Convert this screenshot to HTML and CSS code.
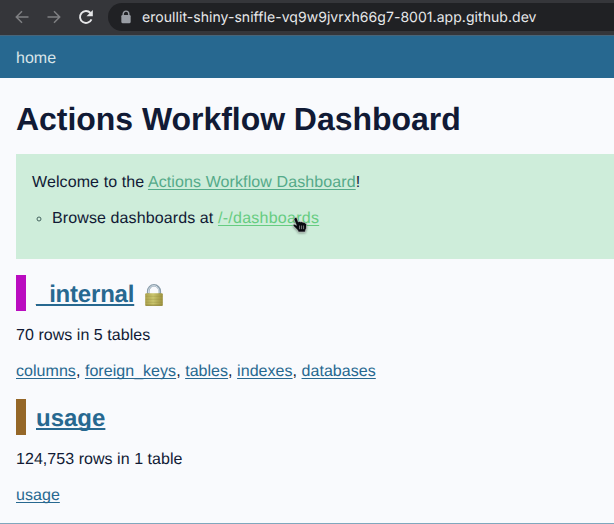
FILE: index.html
```html
<!DOCTYPE html>
<html lang="en">
<head>
<meta charset="utf-8">
<title>Actions Workflow Dashboard</title>
<link rel="stylesheet" href="styles.css">
</head>
<body>
<div class="toolbar">
  <svg class="nav-icon" viewBox="0 0 16 16"><path d="M14.5 8H2.5M8 2.3 2.3 8 8 13.7"/></svg>
  <svg class="nav-icon" viewBox="0 0 16 16"><path d="M1.5 8h12M8 2.3 13.7 8 8 13.7"/></svg>
  <svg class="nav-icon reload" viewBox="0 0 16 16"><path d="M13.5 10.4A6 6 0 1 1 12.5 4"/><path class="solid" d="M14.8 1v6.3H8.5z"/></svg>
  <div class="address">
    <svg class="secure" viewBox="0 0 10 12"><path class="shackle" d="M2.6 5V3.4a2.4 2.4 0 0 1 4.8 0V5"/><rect x="1" y="4.3" width="8" height="7" rx="1"/></svg>
    <span class="url">eroullit-shiny-sniffle-vq9w9jvrxh66g7-8001.app.github.dev</span>
  </div>
</div>
<header class="site-header"><a href="#">home</a></header>
<main class="content">
  <h1>Actions Workflow Dashboard</h1>
  <section class="welcome">
    <p>Welcome to the <a class="title-link" href="#">Actions Workflow Dashboard</a>!</p>
    <ul><li>Browse dashboards at <a class="hovered" href="#">/-/dashboards</a></li></ul>
    <svg class="pointer" viewBox="0 0 16 18"><path d="M2.3 2.2C3.5.8 4.8 1.5 5.2 2.7L6.3 6l.5-.4c.8-.4 1.5-.1 1.9.5.7-.7 1.8-.6 2.2.3 1-.5 2-.1 2.2.9.9-.2 1.6.4 1.5 1.5l-.2 3.5-1 2.1v1.6H6.3l-.6-1.7-4.2-4.2c-1.2-1.4.2-2.5 1.6-1.6l1.3.8L2.2 4.1c-.2-.7-.3-1.3.1-1.9z"/><path class="fingers" d="M7.6 9.5v3.7M9.6 9.5v3.7M11.6 9.5v3.7"/></svg>
  </section>
  <h2 class="internal"><a href="#">_internal</a><svg class="padlock" viewBox="0 0 20 24"><defs><linearGradient id="brass"><stop stop-color="#aaa04b"/><stop offset=".45" stop-color="#cac66f"/><stop offset="1" stop-color="#9c913e"/></linearGradient></defs><path class="hoop" d="M4.2 11V8.3a5.8 6 0 0 1 11.6 0V11"/><path class="hoop-shine" d="M4.6 10V8a5.2 5.4 0 0 1 10.4 0v2"/><rect x="1.2" y="10.2" width="17.6" height="12.5" rx="1" fill="url(#brass)"/><path class="ridge" d="M1.5 13.3h17M1.5 16.3h17M1.5 19.3h17"/><path class="base" d="M1.5 22.2h17"/></svg></h2>
  <p>70 rows in 5 tables</p>
  <p class="tables"><a href="#">columns</a>, <a href="#">foreign_keys</a>, <a href="#">tables</a>, <a href="#">indexes</a>, <a href="#">databases</a></p>
  <h2 class="usage"><a href="#">usage</a></h2>
  <p>124,753 rows in 1 table</p>
  <p><a href="#">usage</a></p>
</main>
<footer></footer>
</body>
</html>
```
FILE: styles.css
```css
* { box-sizing: border-box; }
body {
  margin: 0;
  height: 524px;
  overflow: hidden;
  display: flex;
  flex-direction: column;
  background: #f9fafd;
  color: #111a35;
  font: 16px/24px "Liberation Sans", Arial, sans-serif;
  text-rendering: geometricPrecision;
}
a { color: #276890; text-decoration-thickness: 1px; text-underline-offset: 2px; text-decoration-skip-ink: none; }
.toolbar {
  flex: none;
  height: 35px;
  display: flex;
  align-items: center;
  padding: 0 0 1px 14px;
  gap: 16px;
  background: #35363a;
}
.nav-icon { width: 16px; height: 16px; fill: none; stroke: #7f8083; stroke-width: 1.5; }
.reload { stroke: #e6e7e9; stroke-width: 1.9; }
.reload .solid { fill: #e6e7e9; stroke: none; }
.address {
  flex: 1;
  height: 28px;
  display: flex;
  align-items: center;
  padding-left: 12px;
  margin-left: -2px;
  gap: 10px;
  border-radius: 14px 0 0 14px;
  background: #202124;
}
.secure { width: 12px; height: 14px; fill: #999da4; }
.shackle { fill: none; stroke: #999da4; stroke-width: 1.2; }
.url { color: #e8e9eb; font: 14px/20px Inter, sans-serif; letter-spacing: .05px; padding-top: 1px; white-space: nowrap; }
.site-header {
  flex: none;
  height: 43px;
  padding: 11px 16px 0;
  border-top: 1px solid #47657a;
  background: #276890;
}
.site-header a { color: #d8e5e9; text-decoration: none; }
.content { flex: 1; padding-left: 16px; }
h1 { margin: 17px 0 11px; font-size: 32px; line-height: 48px; letter-spacing: -.04px; }
p { margin: 0 0 12px; line-height: 26px; height: 24px; letter-spacing: .045px; }
.tables { margin-bottom: 16px; }
.welcome { position: relative; height: 105px; padding: 16px; margin-bottom: 16px; background: #ceedda; }
.welcome p { letter-spacing: .1px; }
.welcome .title-link { color: #55aa89; }
.welcome .hovered { color: #66cc81; letter-spacing: .26px; }
ul { margin: 0; padding-left: 20px; list-style: circle; line-height: 26px; letter-spacing: .11px; }
li::marker { color: #44645f; }
.pointer { position: absolute; left: 276px; top: 62px; width: 16px; height: 18px; fill: #090a10; stroke: #eef5f0; stroke-width: .5; filter: drop-shadow(0 1px 1px rgb(0 0 0 / .4)); }
.fingers { stroke: #a5aaa9; stroke-width: .7; }
h2 {
  display: flex;
  align-items: center;
  margin: 0 0 12px;
  height: 36px;
  padding: 3px 0 0 10px;
  border-left: 10px solid;
  font-size: 24px;
  line-height: 36px;
}
h2 a { text-decoration-thickness: 2px; }
h2.internal { border-color: #ba0cc0; letter-spacing: -.2px; }
h2.usage { border-color: #956728; }
.padlock { width: 20px; height: 24px; margin-left: 10px; }
.hoop { fill: none; stroke: #8b9dab; stroke-width: 2.6; }
.hoop-shine { fill: none; stroke: #d4e0e9; stroke-width: 1; }
.ridge { stroke: #8f873d; stroke-width: .6; opacity: .5; }
.base { stroke: #8c8135; stroke-width: 1; }
footer { flex: none; height: 1px; background: #7fa7bd; }
```
